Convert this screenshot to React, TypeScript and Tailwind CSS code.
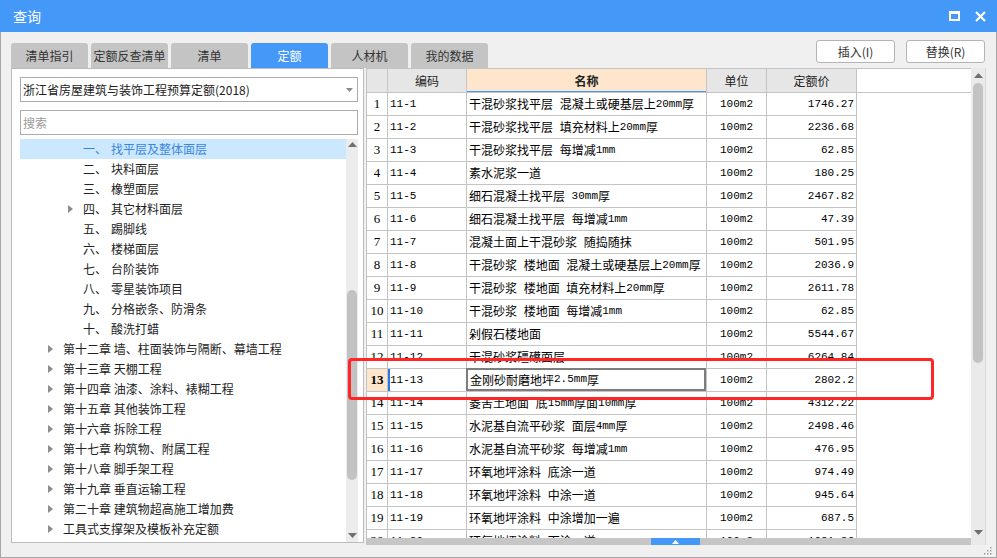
import React from "react"

const tabs = ["清单指引", "定额反查清单", "清单", "定额", "人材机", "我的数据"]

const subItems = [
  ["一、", "找平层及整体面层"],
  ["二、", "块料面层"],
  ["三、", "橡塑面层"],
  ["四、", "其它材料面层"],
  ["五、", "踢脚线"],
  ["六、", "楼梯面层"],
  ["七、", "台阶装饰"],
  ["八、", "零星装饰项目"],
  ["九、", "分格嵌条、防滑条"],
  ["十、", "酸洗打蜡"],
]

const chapters = [
  "第十二章 墙、柱面装饰与隔断、幕墙工程",
  "第十三章 天棚工程",
  "第十四章 油漆、涂料、裱糊工程",
  "第十五章 其他装饰工程",
  "第十六章 拆除工程",
  "第十七章 构筑物、附属工程",
  "第十八章 脚手架工程",
  "第十九章 垂直运输工程",
  "第二十章 建筑物超高施工增加费",
  "工具式支撑架及模板补充定额",
]

const rows: [string, string, string][] = [
  ["11-1", "干混砂浆找平层 混凝土或硬基层上20mm厚", "1746.27"],
  ["11-2", "干混砂浆找平层 填充材料上20mm厚", "2236.68"],
  ["11-3", "干混砂浆找平层 每增减1mm", "62.85"],
  ["11-4", "素水泥浆一道", "180.25"],
  ["11-5", "细石混凝土找平层 30mm厚", "2467.82"],
  ["11-6", "细石混凝土找平层 每增减1mm", "47.39"],
  ["11-7", "混凝土面上干混砂浆 随捣随抹", "501.95"],
  ["11-8", "干混砂浆 楼地面 混凝土或硬基层上20mm厚", "2036.9"],
  ["11-9", "干混砂浆 楼地面 填充材料上20mm厚", "2611.78"],
  ["11-10", "干混砂浆 楼地面 每增减1mm", "62.85"],
  ["11-11", "剁假石楼地面", "5544.67"],
  ["11-12", "干混砂浆礓礤面层", "6264.84"],
  ["11-13", "金刚砂耐磨地坪2.5mm厚", "2802.2"],
  ["11-14", "菱苦土地面 底15mm厚面10mm厚", "4312.22"],
  ["11-15", "水泥基自流平砂浆 面层4mm厚", "2498.46"],
  ["11-16", "水泥基自流平砂浆 每增减1mm", "476.95"],
  ["11-17", "环氧地坪涂料 底涂一道", "974.49"],
  ["11-18", "环氧地坪涂料 中涂一道", "945.64"],
  ["11-19", "环氧地坪涂料 中涂增加一遍", "687.5"],
  ["11-20", "环氧地坪涂料 面涂一道", "1081.36"],
]

// latin runs in a narrower monospace so mixed text keeps the SimSun-ish widths
function MixedText({ text }: { text: string }) {
  const parts = text.split(/([\x20-\x7e]+)/).filter(Boolean)
  return (
    <>
      {parts.map((p, i) =>
        /^[\x20-\x7e]+$/.test(p) ? (
          <span key={i} className="font-['Liberation_Mono',monospace] text-[11px] whitespace-pre">
            {p}
          </span>
        ) : (
          <span key={i}>{p}</span>
        )
      )}
    </>
  )
}

function Arrow() {
  return (
    <svg width="5" height="8" viewBox="0 0 5 8" className="shrink-0">
      <path d="M0 0 L5 4 L0 8 Z" fill="#8c8c8c" />
    </svg>
  )
}

function UpTri() {
  return (
    <svg width="9" height="5" viewBox="0 0 9 5">
      <path d="M0 5 L4.5 0 L9 5 Z" fill="#707070" />
    </svg>
  )
}

function DownTri() {
  return (
    <svg width="9" height="5" viewBox="0 0 9 5">
      <path d="M0 0 L4.5 5 L9 0 Z" fill="#707070" />
    </svg>
  )
}

export default function App() {
  const mono = "font-['Liberation_Mono','Noto_Sans_CJK_SC',monospace]"

  return (
    <div className="w-[997px] h-[558px] bg-[#f0f0f0] flex flex-col relative overflow-hidden font-['Noto_Sans_CJK_SC',sans-serif] text-[#222]">
      {/* Title bar */}
      <div className="h-[32px] bg-[#4499f8] flex items-center pl-[13px] pr-[11px] text-white shrink-0">
        <span className="text-[14px]">查询</span>
        <div className="ml-auto flex items-center gap-[15px]">
          <svg width="11" height="10" viewBox="0 0 11 10">
            <rect x="1" y="1.5" width="9" height="7.5" fill="none" stroke="white" strokeWidth="2" />
            <rect x="0" y="0" width="11" height="3" fill="white" />
          </svg>
          <svg width="11" height="11" viewBox="0 0 11 11">
            <path d="M1 1 L10 10 M10 1 L1 10" stroke="white" strokeWidth="2.2" />
          </svg>
        </div>
      </div>

      {/* Body */}
      <div className="flex-1 flex flex-col px-[10px] border-x border-b border-[#a6a6a6]">
        {/* Tabs and buttons */}
        <div className="h-[36px] flex items-end shrink-0">
          <div className="flex gap-[3px]">
            {tabs.map((t) => (
              <div
                key={t}
                className={`w-[77px] h-[25px] rounded-t-[3px] flex items-center justify-center text-[12px] ${
                  t === "定额" ? "bg-[#4499f8] text-white" : "bg-[#c4c4c4] text-[#333]"
                }`}
              >
                {t}
              </div>
            ))}
          </div>
          <div className="ml-auto self-start mt-[8px] flex gap-[11px] mr-[1px]">
            <button className="w-[79px] h-[23px] bg-white border border-[#b4b4b4] rounded-[3px] text-[12px] text-[#333]">
              插入(I)
            </button>
            <button className="w-[79px] h-[23px] bg-white border border-[#b4b4b4] rounded-[3px] text-[12px] text-[#333]">
              替换(R)
            </button>
          </div>
        </div>

        {/* Main */}
        <div className="flex items-start gap-[2px] h-[477px] shrink-0">
          {/* Left panel */}
          <div className="w-[353px] h-[475px] bg-white border border-[#bcbcbc] flex flex-col pl-[8px] pr-[5px] pt-[8px]">
            <div className="h-[25px] border border-[#ababab] flex items-center pl-[2px] pr-[4px] text-[12px] text-[#222] shrink-0">
              <span>浙江省房屋建筑与装饰工程预算定额(2018)</span>
              <svg width="7" height="4" viewBox="0 0 7 4" className="ml-auto">
                <path d="M0 0 L3.5 4 L7 0 Z" fill="#8a8a8a" />
              </svg>
            </div>
            <div className="h-[25px] mt-[8px] border border-[#ababab] flex items-center pl-[2px] text-[12px] text-[#9a9a9a] shrink-0">
              搜索
            </div>
            <div className="mt-[4px] flex flex-1 min-h-0">
              <div className="flex-1 overflow-hidden">
                {subItems.map(([n, name], i) => (
                  <div
                    key={n}
                    className={`h-[20px] flex items-center text-[12px] ${
                      i === 0 ? "bg-[#cce8ff] text-[#3a86dc]" : "text-[#222]"
                    }`}
                  >
                    <div className="w-[63px] pl-[48px] flex items-center">{n === "四、" && <Arrow />}</div>
                    <span className="w-[28px]">{n}</span>
                    <span>{name}</span>
                  </div>
                ))}
                {chapters.map((c) => (
                  <div key={c} className="h-[20px] flex items-center text-[12px] text-[#222]">
                    <div className="w-[43px] pl-[28px] flex items-center">
                      <Arrow />
                    </div>
                    <span>{c}</span>
                  </div>
                ))}
              </div>
              <div className="w-[12px] bg-[#ececec] flex flex-col items-center pt-[3px] pb-[4px]">
                <UpTri />
                <div className="flex-1 w-full relative">
                  <div className="absolute left-[1px] right-[1px] top-[143px] h-[190px] bg-[#c2c2c2] rounded-full" />
                </div>
                <DownTri />
              </div>
            </div>
          </div>

          {/* Right panel */}
          <div className="flex-1 h-[477px] flex border-r border-[#dadada]">
            <div className="flex-1 flex flex-col min-w-0">
              <div className="h-[470px] bg-white border-l border-t border-[#c4c4c4] overflow-hidden">
                {/* header */}
                <div className="flex h-[24px] border-b border-[#c4c4c4] text-[12px] text-[#222]">
                  <div className="w-[21px] bg-[#e6e6e6] border-r border-[#c4c4c4]" />
                  <div className="w-[79px] bg-[#e6e6e6] border-r border-[#c4c4c4] flex items-center justify-center">编码</div>
                  <div className="w-[240px] bg-[#fde6cb] border-r border-[#c4c4c4] flex items-center justify-center font-bold relative">
                    名称
                    <div className="absolute left-0 right-0 bottom-0 h-[1px] bg-[#4499f8]" />
                  </div>
                  <div className="w-[60px] bg-[#e6e6e6] border-r border-[#c4c4c4] flex items-center justify-center">单位</div>
                  <div className="w-[90px] bg-[#e6e6e6] border-r border-[#c4c4c4] flex items-center justify-center">定额价</div>
                </div>
                {rows.map(([code, name, price], i) => {
                  const sel = i === 12
                  return (
                    <div key={code} className="flex h-[23px] text-black">
                      <div
                        className={`w-[21px] border-r border-b border-[#c4c4c4] flex items-center justify-center font-['Liberation_Serif',serif] text-[13px] ${
                          sel ? "bg-[#fde6cb] font-bold" : "bg-white"
                        }`}
                      >
                        {i + 1}
                      </div>
                      <div
                        className={
                          sel
                            ? `w-[79px] border-b border-r border-[#c4c4c4] flex items-center text-[11px] relative pl-[2px] ${mono}`
                            : `w-[79px] border-b border-r border-[#c4c4c4] flex items-center text-[11px] pl-[2px] ${mono}`
                        }
                      >
                        {sel && <div className="absolute left-0 top-0 bottom-0 w-[2px] bg-[#2a78e8]" />}
                        {code}
                      </div>
                      <div className="w-[240px] border-b border-r border-[#c4c4c4] relative">
                        <div
                          className={
                            sel
                              ? "absolute -left-[1px] -top-[1px] right-[0px] bottom-[0px] border-2 border-[#7d7d7d] flex items-center pl-[2px] text-[12px] whitespace-nowrap overflow-hidden"
                              : "absolute inset-0 flex items-center pl-[2px] text-[12px] whitespace-nowrap overflow-hidden"
                          }
                        >
                          <MixedText text={name} />
                        </div>
                      </div>
                      <div className={`w-[60px] border-r border-b border-[#c4c4c4] flex items-center justify-center text-[11px] ${mono}`}>
                        100m2
                      </div>
                      <div className={`w-[90px] border-r border-b border-[#c4c4c4] flex items-center justify-end pr-[2px] text-[11px] ${mono}`}>
                        {price}
                      </div>
                    </div>
                  )
                })}
              </div>
              {/* horizontal bar */}
              <div className="h-[7px] bg-[#c6c6c6] relative">
                <div className="absolute left-[285px] w-[49px] top-0 bottom-0 bg-[#4499f8] flex items-center justify-center">
                  <svg width="7" height="4" viewBox="0 0 7 4">
                    <path d="M0 4 L3.5 0 L7 4 Z" fill="white" />
                  </svg>
                </div>
              </div>
            </div>
            {/* vertical scrollbar */}
            <div className="w-[14px] bg-[#eaeaea] flex flex-col items-center pt-[5px] pb-[10px]">
              <UpTri />
              <div className="flex-1 w-full relative">
                <div className="absolute left-[2px] right-[2px] top-[5px] h-[280px] bg-[#c2c2c2] rounded-full" />
              </div>
              <DownTri />
            </div>
          </div>
        </div>

        {/* bottom strip with resize grip */}
        <div className="flex-1 flex justify-end items-end pb-[2px]">
          <svg width="8" height="8" viewBox="0 0 8 8" className="-mr-[6px]">
            <rect x="6" y="0" width="1.5" height="1.5" fill="#a0a0a0" />
            <rect x="3" y="3" width="1.5" height="1.5" fill="#a0a0a0" />
            <rect x="6" y="3" width="1.5" height="1.5" fill="#a0a0a0" />
            <rect x="0" y="6" width="1.5" height="1.5" fill="#a0a0a0" />
            <rect x="3" y="6" width="1.5" height="1.5" fill="#a0a0a0" />
            <rect x="6" y="6" width="1.5" height="1.5" fill="#a0a0a0" />
          </svg>
        </div>
      </div>

      {/* red annotation */}
      <div className="absolute left-[348px] top-[358px] w-[586px] h-[42px] border-[3px] border-[#ff2626] rounded-[4px] pointer-events-none" />
    </div>
  )
}
